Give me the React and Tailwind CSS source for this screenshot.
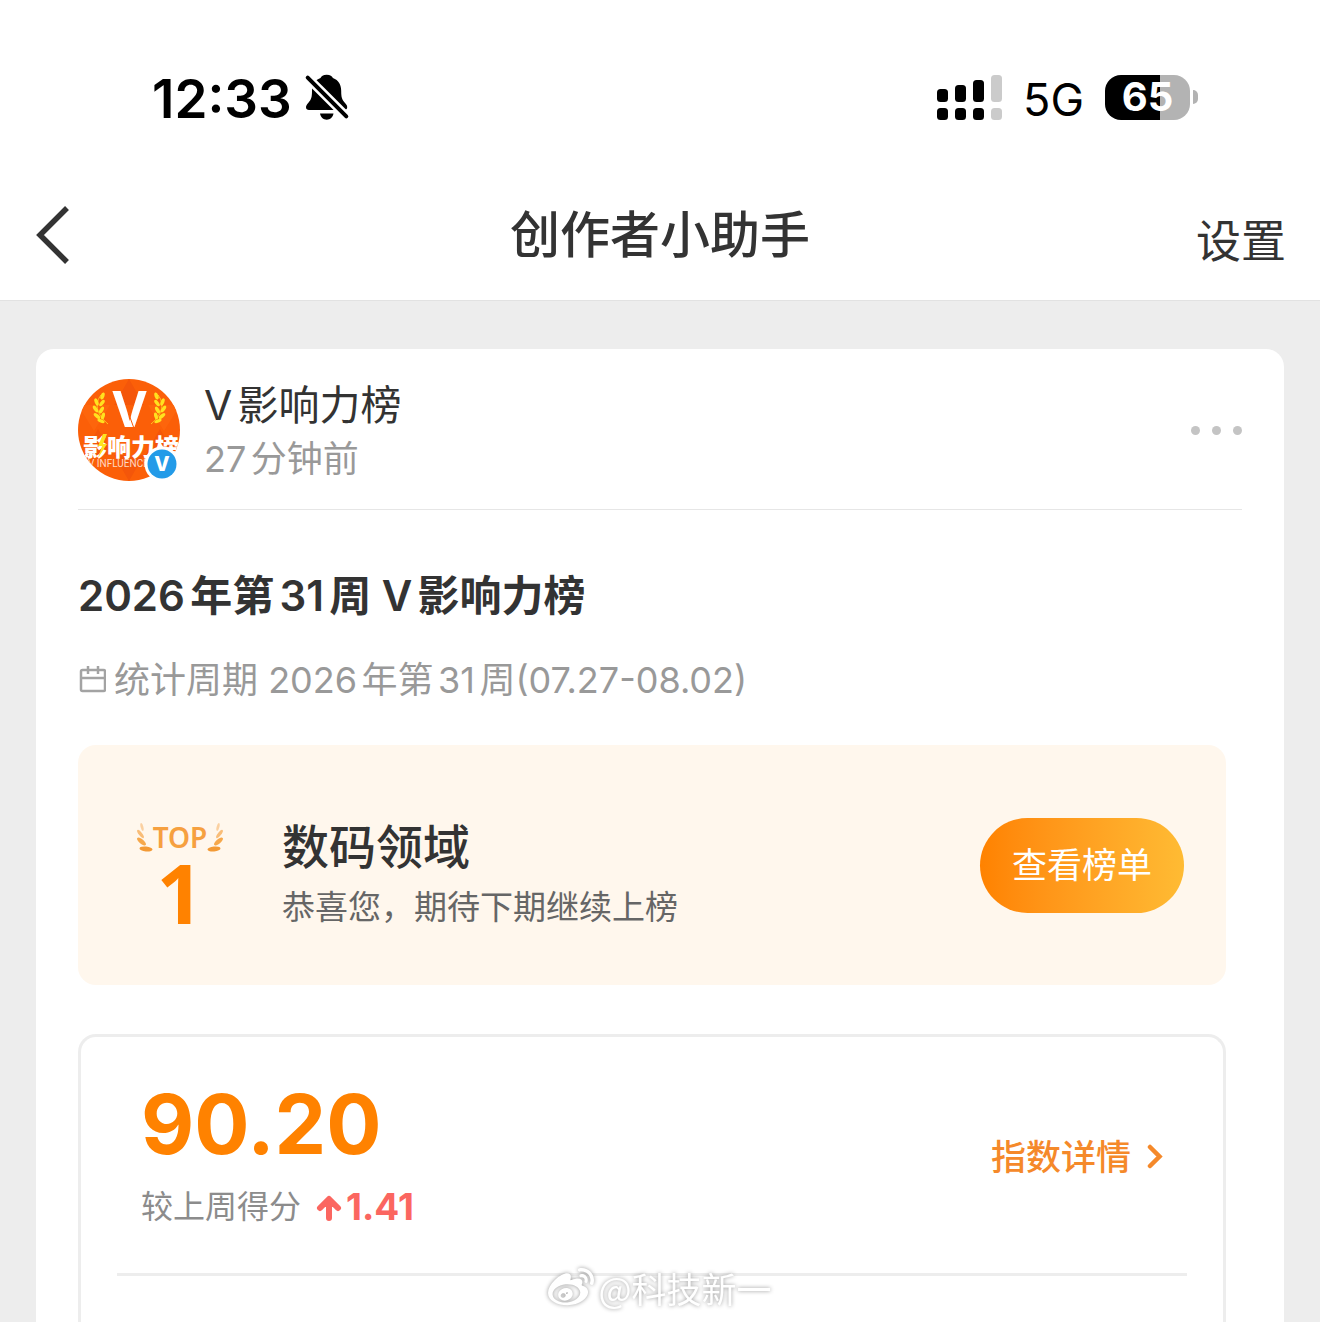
import React from 'react';
import { FaWeibo } from 'react-icons/fa';

const signalBars = [
  { x: 0, height: 13, active: true },
  { x: 18, height: 17, active: true },
  { x: 36, height: 22, active: true },
  { x: 54, height: 27, active: false },
];

const report = {
  title: '2026年第31周 V影响力榜',
  period: '2026年第31周(07.27-08.02)',
  field: '数码领域',
  message: '恭喜您，期待下期继续上榜',
  rank: 1,
  score: '90.20',
  change: '1.41',
};

function BellOffIcon() {
  return (
    <svg width="46" height="48" viewBox="0 0 46 48" aria-hidden="true">
      <path
        d="M22.7 1.7c-3.6 0-5.4 1.6-6.2 3.4C10.6 7.2 8 12 8 18c0 6.5-.8 8.5-3.6 11.8C2.7 31.8 2 32.8 2 34.3 2 36.1 3.2 37 5 37h35c1.9 0 3.2-1 3.2-2.8 0-1.5-.8-2.5-2.4-4.4C38 26.5 37.2 24.5 37.2 18c0-6-2.5-10.8-8.3-12.9-.8-1.8-2.6-3.4-6.2-3.4z"
      />
      <path d="M16 40.5h13.5c-.6 3.7-3.3 6.2-6.8 6.2s-6.1-2.5-6.7-6.2z" />
      <path d="M3.7 4.7 42.3 43.3" stroke="#fff" strokeWidth="9" />
      <path d="M3.7 4.7 42.3 43.3" stroke="#000" strokeWidth="4" strokeLinecap="round" />
    </svg>
  );
}

function SignalIcon() {
  return (
    <svg width="65" height="45" viewBox="0 0 65 45" role="img" aria-label="信号">
      {signalBars.map((bar) => (
        <g key={bar.x} fill={bar.active ? '#000' : '#cbcbcb'}>
          <rect x={bar.x} y={27 - bar.height} width="11" height={bar.height} rx="3.5" />
          <rect x={bar.x} y="33" width="11" height="12" rx="3.5" />
        </g>
      ))}
    </svg>
  );
}

function Battery({ level }) {
  return (
    <div className="flex items-center gap-[3px]">
      <div className="flex h-[45px] w-[85px] items-center justify-center rounded-[16px] bg-[linear-gradient(90deg,#000_65%,#b3b3b3_65%)] text-[40px] leading-none font-bold text-white">
        {level}
      </div>
      <div className="h-[14px] w-[5px] rounded-r-full bg-[#b3b3b3]" />
    </div>
  );
}

function StatusBar() {
  return (
    <div className="flex h-[150px] items-center justify-between pt-11 pr-[122px] pl-[152px] text-black">
      <div className="flex items-center gap-3">
        <span className="pt-1 text-[53px] leading-none font-semibold">12:33</span>
        <BellOffIcon />
      </div>
      <div className="flex items-center gap-[21px]">
        <SignalIcon />
        <span className="pt-1 text-[45px] leading-none">5G</span>
        <Battery level={65} />
      </div>
    </div>
  );
}

function NavBar() {
  return (
    <header className="grid h-[151px] grid-cols-3 items-center border-b border-[#e2e2e2] px-[34px] pt-5">
      <button type="button" aria-label="返回" className="justify-self-start">
        <svg width="36" height="58" viewBox="0 0 36 58" fill="none">
          <path d="M33 2 6 29l27 27" stroke="#333" strokeWidth="5.5" />
        </svg>
      </button>
      <h1 className="text-center text-[50px] leading-none font-medium whitespace-nowrap">创作者小助手</h1>
      <button type="button" className="justify-self-end pt-3 text-[45px] leading-none">
        设置
      </button>
    </header>
  );
}

function Wheat({ flip }) {
  return (
    <g transform={flip ? 'translate(103 0) scale(-1 1)' : undefined} fill="#ffe21f">
      <path d="M23 16c-6 8-6 18 7 29" fill="none" stroke="#ffc21f" strokeWidth="1" />
      <ellipse cx="24.5" cy="17" rx="1.9" ry="3.6" transform="rotate(20 24.5 17)" />
      <ellipse cx="18.5" cy="23" rx="1.8" ry="3.8" transform="rotate(-22 18.5 23)" />
      <ellipse cx="24" cy="24" rx="1.8" ry="3.8" transform="rotate(38 24 24)" />
      <ellipse cx="17.5" cy="30" rx="1.8" ry="3.9" transform="rotate(-35 17.5 30)" />
      <ellipse cx="23.5" cy="31" rx="1.8" ry="3.8" transform="rotate(30 23.5 31)" />
      <ellipse cx="19" cy="37" rx="1.8" ry="3.9" transform="rotate(-52 19 37)" />
      <ellipse cx="25" cy="37" rx="1.8" ry="3.6" transform="rotate(15 25 37)" />
      <ellipse cx="23" cy="42" rx="1.7" ry="3.8" transform="rotate(-68 23 42)" />
    </g>
  );
}

function Avatar() {
  return (
    <svg width="102" height="102" viewBox="0 0 102 102" role="img" aria-label="V影响力榜">
      <defs>
        <clipPath id="avatarClip">
          <circle cx="51" cy="51" r="51" />
        </clipPath>
      </defs>
      <g clipPath="url(#avatarClip)">
        <rect width="102" height="102" fill="#fb5f08" />
        <path d="M51 0 66 26H36zM20 50l15 26H5zM82 50l15 26H67zM51 102 36 76h30z" fill="#f4560a" />
        <path d="M0 26h32L16 52zM70 26h32L86 52z" fill="#fd650c" />
        <Wheat />
        <Wheat flip />
        <text x="51.5" y="48" textAnchor="middle" fill="#fff" className="font-[Inter] text-[49px] font-bold">
          V
        </text>
        <path d="m51.5 37 4 11" stroke="#fb5f08" strokeWidth="1" />
        <text
          x="53"
          y="77"
          textAnchor="middle"
          fill="#fff"
          className="font-['Noto_Sans_CJK_SC'] text-[24px] font-black"
        >
          影响力榜
        </text>
        <path d="m25 55-5 12h4l-4 12 9-14h-4l4-10z" fill="#ffe21f" />
        <text x="10" y="88" fill="#ffd9c2" className="font-[Roboto] text-[10px]">
          V INFLUENCE
        </text>
      </g>
      <circle cx="84" cy="85" r="17.5" fill="#fff" />
      <circle cx="84" cy="85" r="14.5" fill="#239be8" />
      <text x="84" y="92" textAnchor="middle" fill="#fff" className="font-[Inter] text-[20px] font-extrabold">
        V
      </text>
    </svg>
  );
}

function CalendarIcon() {
  return (
    <svg width="28" height="28" viewBox="0 0 28 28" fill="none" stroke="#a3a3a3" strokeWidth="2.5" aria-hidden="true">
      <rect x="3" y="4" width="24" height="21" rx="1.5" />
      <path d="M3 12h24M10 0v8M20 0v8" />
    </svg>
  );
}

function Laurel({ flip }) {
  return (
    <svg
      width="17"
      height="29"
      viewBox="0 0 17 29"
      fill="#f6a84b"
      className={flip ? '-scale-x-100' : ''}
      aria-hidden="true"
    >
      <ellipse cx="6" cy="4" rx="1.4" ry="4" transform="rotate(-14 6 4)" fill="#fbd0a0" />
      <ellipse cx="4.5" cy="11" rx="1.7" ry="5" transform="rotate(-38 4.5 11)" fill="#f9bd78" />
      <ellipse cx="5.5" cy="18.5" rx="2.2" ry="5.5" transform="rotate(-50 5.5 18.5)" />
      <ellipse cx="10" cy="26" rx="2.4" ry="6.5" transform="rotate(-84 10 26)" fill="#f39a35" />
    </svg>
  );
}

function RankBadge({ rank }) {
  return (
    <div className="flex w-[90px] flex-col items-center pt-6 font-['Noto_Sans',sans-serif]">
      <div className="flex items-center">
        <Laurel />
        <span className="text-[28px] leading-7 font-semibold text-[#f6a040]">TOP</span>
        <Laurel flip />
      </div>
      <span className="text-[82px] leading-[80px] font-bold text-[#ff8200]">{rank}</span>
    </div>
  );
}

function RankCard() {
  return (
    <section className="flex h-[240px] items-center rounded-[18px] bg-[#fff7ed] pr-[42px] pl-[57px]">
      <RankBadge rank={report.rank} />
      <div className="ml-[57px] flex-1 pt-6">
        <h3 className="text-[47px] leading-[60px] font-medium">{report.field}</h3>
        <p className="text-[33px] leading-[60px] text-[#666]">{report.message}</p>
      </div>
      <button
        type="button"
        className="h-[95px] rounded-full bg-linear-to-r from-[#ff8200] to-[#ffbb33] px-8 text-[35px] leading-none text-white"
      >
        查看榜单
      </button>
    </section>
  );
}

function ScoreCard() {
  return (
    <section className="mt-[49px] flex-1 rounded-t-[18px] border-3 border-b-0 border-[#ededed] px-9">
      <div className="flex items-center justify-between border-b-3 border-[#ededed] pt-[46px] pr-6 pb-[42px] pl-6">
        <div>
          <p className="text-[82px] leading-[84px] font-bold text-[#ff8200]">{report.score}</p>
          <p className="flex items-center pt-4 text-[32px] leading-[48px] text-[#8c8c8c]">
            较上周得分
            <svg
              width="26"
              height="27"
              viewBox="0 0 26 27"
              fill="none"
              stroke="#fb6660"
              strokeWidth="6"
              strokeLinecap="round"
              strokeLinejoin="round"
              className="ml-[15px]"
              aria-hidden="true"
            >
              <path d="M13 24V6M4 14l9-9 9 9" />
              <path d="M9 12h8l-4-5z" fill="#fb6660" strokeWidth="2" />
            </svg>
            <span className="ml-1 text-[37px] font-bold text-[#fb6660]">{report.change}</span>
          </p>
        </div>
        <a href="#detail" className="flex items-center gap-4 text-[35px] leading-none font-medium text-[#f5892a]">
          指数详情
          <svg width="16" height="26" viewBox="0 0 16 26" fill="none" aria-hidden="true">
            <path d="m3 3 9.5 9.5L3 22" stroke="#f5892a" strokeWidth="4.5" strokeLinecap="round" />
          </svg>
        </a>
      </div>
    </section>
  );
}

function PostHeader() {
  return (
    <div className="flex items-center border-b border-[#e6e6e6] pb-[23px]">
      <Avatar />
      <div className="ml-6 flex-1 pt-1">
        <h2 className="text-[41px] leading-[54px]">V影响力榜</h2>
        <p className="text-[36px] leading-[54px] text-[#999]">27分钟前</p>
      </div>
      <button type="button" aria-label="更多" className="flex gap-3">
        <span className="size-[9px] rounded-full bg-[#c4c4c4]" />
        <span className="size-[9px] rounded-full bg-[#c4c4c4]" />
        <span className="size-[9px] rounded-full bg-[#c4c4c4]" />
      </button>
    </div>
  );
}

export default function App() {
  return (
    <div
      lang="zh-CN"
      className="relative flex min-h-screen flex-col bg-white font-[Inter,'Noto_Sans_CJK_SC',sans-serif] text-[#333] [text-autospace:normal]"
    >
      <StatusBar />
      <NavBar />
      <main className="flex flex-1 flex-col bg-[#ededed] px-9 pt-12">
        <article className="flex flex-1 flex-col rounded-t-[18px] bg-white px-[42px] pt-[25px]">
          <PostHeader />
          <div className="flex flex-1 flex-col pt-[56px] pr-4">
            <h2 className="text-[42px] leading-[60px] font-semibold">{report.title}</h2>
            <p className="mt-6 mb-[35px] flex items-center gap-2 text-[36px] leading-[60px] text-[#999]">
              <CalendarIcon />
              统计周期 {report.period}
            </p>
            <RankCard />
            <ScoreCard />
          </div>
        </article>
      </main>
      <div className="absolute inset-x-0 bottom-[10px] flex items-center justify-center gap-1 font-['Noto_Sans_CJK_SC',sans-serif] text-[35px] leading-[48px] text-white drop-shadow-[0_0_2px_#999] [text-autospace:no-autospace]">
        <FaWeibo className="size-[46px]" />
        <span>@科技新一</span>
      </div>
    </div>
  );
}
